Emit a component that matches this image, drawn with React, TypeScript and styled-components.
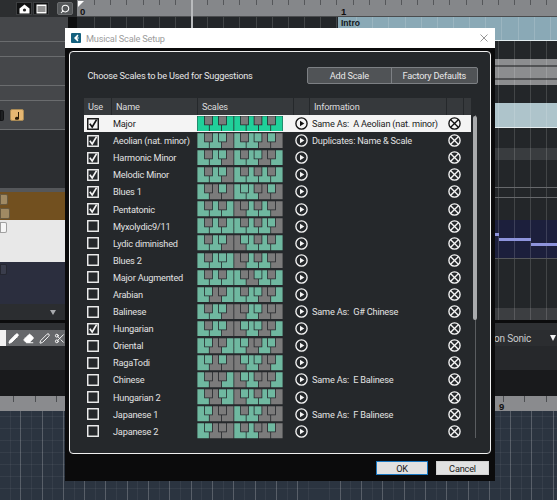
import React from "react";
import styled, { createGlobalStyle, css } from "styled-components";
import { Pencil, Eraser, Pen, Scissors, Search } from "lucide-react";

const Global = createGlobalStyle`
  html, body { margin: 0; padding: 0; background: #1a1b1d; }
  * { box-sizing: border-box; }
`;

const FONT = `Roboto, "Noto Sans", "Liberation Sans", sans-serif`;
const TEXT = "9.2px";

const Stage = styled.div`
  position: relative;
  width: 557px;
  height: 500px;
  overflow: hidden;
  font-family: ${FONT};
  letter-spacing: -0.2px;
  background: #1a1b1d;
`;

const Upper = styled.div`
  display: grid;
  grid-template-columns: 68px 9px 1fr;
  height: 320px;
`;

const Rail = styled.div`
  display: flex;
  flex-direction: column;
`;

const RailGap = styled.div`
  background: #0e0f10;
`;

const TopBar = styled.div`
  position: relative;
  z-index: 1;
  width: 77px;
  height: 17px;
  flex: none;
  display: flex;
  align-items: center;
  padding-left: 16px;
  gap: 1px;
  background: #2c2e30;
`;

const IconButton = styled.div`
  width: 16px;
  height: 13px;
  display: flex;
  align-items: center;
  justify-content: center;
  background: #111213;
  border: 1px solid #3c3e40;
  color: #fff;
`;

const SearchButton = styled(IconButton)`
  margin-left: 7px;
  background: #55585a;
  border-radius: 2px;
  border-color: #6a6c6e;
`;

const RailRow = styled.div<{ $h: number; $bg?: string }>`
  height: ${(p) => p.$h}px;
  flex: none;
  background: ${(p) => p.$bg || "#45474a"};
  border-bottom: 1px solid #6a6c6e;
  display: flex;
  align-items: center;
  gap: 3px;
`;

const RailBlock = styled.div<{ $h: number; $bg: string }>`
  height: ${(p) => p.$h}px;
  flex: none;
  background: ${(p) => p.$bg};
  display: flex;
  flex-direction: column;
  gap: 3px;
  padding-top: 2px;
`;

const StubButton = styled.div<{ $w: number; $bg: string }>`
  width: ${(p) => p.$w}px;
  height: 11px;
  flex: none;
  background: ${(p) => p.$bg};
  border: 1px solid rgba(0, 0, 0, 0.35);
  border-radius: 0 2px 2px 0;
`;

const NoteButton = styled.div`
  width: 14px;
  height: 12px;
  margin-left: 3px;
  background: #e6b772;
  border: 1px solid #a98a55;
  border-radius: 2px;
  display: flex;
  align-items: center;
  justify-content: center;
`;

const RailFoot = styled.div`
  flex: 1;
  background: #2b2d30;
  display: flex;
  justify-content: flex-end;
  align-items: center;
  padding-right: 12px;
`;

const RailCaret = styled.span`
  width: 0;
  height: 0;
  border-left: 3.5px solid transparent;
  border-right: 3.5px solid transparent;
  border-top: 5px solid #a8aaad;
`;

const Arrangement = styled.div`
  display: flex;
  flex-direction: column;
  overflow: hidden;
  background: #232629;
`;

const gridLines = css`
  background-image: repeating-linear-gradient(
    90deg,
    transparent 0 15.15px,
    rgba(255, 255, 255, 0.14) 15.15px 16.15px
  );
  background-position: 2px 0;
`;

const Ruler = styled.div`
  position: relative;
  height: 17px;
  flex: none;
  background-color: #85878a;
  background-image: repeating-linear-gradient(
    90deg,
    transparent 0 15.15px,
    #55575a 15.15px 16.15px
  );
  background-size: 100% 5px;
  background-repeat: no-repeat;
  background-position: 2px 0;
  border-bottom: 1px solid #4a4c4e;
`;

const RulerNumber = styled.span<{ $x: number }>`
  position: absolute;
  left: ${(p) => p.$x}px;
  top: 6px;
  font: 700 9.5px "Liberation Sans", sans-serif;
  letter-spacing: 0;
  color: #111;
`;

const StartMark = styled.div`
  position: absolute;
  left: 1px;
  top: 1px;
  width: 0;
  height: 0;
  border-top: 6px solid #fff;
  border-right: 6px solid transparent;
`;

const Playhead = styled.div`
  position: absolute;
  left: 114px;
  top: 0;
  width: 2px;
  height: 28px;
  background: #b9bbbd;
  z-index: 1;
`;

const Band = styled.div<{ $h: number; $bg?: string; $line?: string }>`
  position: relative;
  height: ${(p) => p.$h}px;
  flex: none;
  background-color: ${(p) => p.$bg || "#232629"};
  ${gridLines}
  ${(p) => p.$line && `border-bottom: 1px solid ${p.$line};`}
`;

const IntroClip = styled.div`
  margin-left: 261px;
  height: 100%;
  padding: 1px 0 0 3px;
  background-color: #8aa9b6;
  ${gridLines}
  background-position: 3px 0;
  font: 700 8.5px "Liberation Sans", sans-serif;
  letter-spacing: 0;
  color: #14181b;
  border-bottom: 1px solid #e4eef1;
`;

const Wave = styled.svg`
  display: block;
  width: 100%;
  height: 100%;
`;

const MidiNote = styled.div<{ $x: number; $y: number; $w: number }>`
  position: absolute;
  left: ${(p) => p.$x}px;
  top: ${(p) => p.$y}px;
  width: ${(p) => p.$w}px;
  height: 3px;
  background: #8e94dc;
`;

const Stack = styled.div`
  display: flex;
  flex-direction: column;
`;

const Strip = styled.div<{ $h: number; $bg: string }>`
  height: ${(p) => p.$h}px;
  background: ${(p) => p.$bg};
`;

const ToolBar = styled.div`
  height: 16px;
  display: flex;
  align-items: center;
  justify-content: space-between;
  background: #2b2d30;
`;

const Tools = styled.div`
  width: 65px;
  height: 16px;
  display: flex;
  align-items: center;
  gap: 4px;
  background: linear-gradient(90deg, #f2f2f2 0 6px, #66686b 6px);
  padding-left: 8px;
  color: #fff;
  overflow: hidden;
`;

const SonicLabel = styled.div`
  display: flex;
  align-items: center;
  gap: 19px;
  padding-right: 1px;
  font-size: 10px;
  color: #c9cbce;
`;

const Caret = styled.span`
  width: 0;
  height: 0;
  border-left: 3.5px solid transparent;
  border-right: 3.5px solid transparent;
  border-top: 6px solid #f2f2f2;
`;

const LowerRuler = styled.div`
  position: relative;
  height: 15px;
  background-color: #8a8b8e;
  background-image: repeating-linear-gradient(
    90deg,
    transparent 0 20.3px,
    #4d4f52 20.3px 21.3px
  );
  background-size: 100% 6px;
  background-repeat: no-repeat;
  background-position: -7px 0;
`;

const LowerNumber = styled(RulerNumber)`
  top: 5px;
`;

const LowerGrid = styled.div`
  height: 89px;
  background-color: #2b3440;
  background-image:
    repeating-linear-gradient(90deg, transparent 0 20.3px, rgba(255, 255, 255, 0.17) 20.3px 21.3px),
    repeating-linear-gradient(90deg, transparent 0 9.65px, rgba(255, 255, 255, 0.05) 9.65px 10.65px),
    repeating-linear-gradient(0deg, transparent 0 11px, rgba(255, 255, 255, 0.05) 11px 12px);
`;

/* ---- dialog ---- */

const Dialog = styled.div`
  position: absolute;
  left: 65px;
  top: 28px;
  width: 430px;
  height: 453px;
  display: flex;
  flex-direction: column;
  background: #0b0b0c;
  z-index: 2;
`;

const TitleBar = styled.div`
  height: 20px;
  flex: none;
  display: flex;
  align-items: center;
  padding: 0 7px 0 6px;
  gap: 5px;
  background: #fff;
  color: #9c9c9c;
  font-size: ${TEXT};
`;

const TitleText = styled.span`
  flex: 1;
`;

const Panel = styled.div`
  margin: 3px 4px 0;
  height: 403px;
  flex: none;
  padding: 15px 0 0 14px;
  background: #25282b;
  border: 1.5px solid #f0f0f0;
  border-radius: 4px;
  display: flex;
  flex-direction: column;
`;

const PanelHead = styled.div`
  display: flex;
  align-items: center;
  justify-content: space-between;
  height: 17px;
  padding: 0 12.5px 0 3.5px;
`;

const PanelTitle = styled.div`
  font-size: ${TEXT};
  color: #e6e6e6;
`;

const Segments = styled.div`
  display: flex;
  width: 171px;
  height: 17px;
  background: #505356;
  border: 1px solid #7d8084;
  border-radius: 2px;
`;

const Segment = styled.div<{ $w: number }>`
  width: ${(p) => p.$w}px;
  display: flex;
  align-items: center;
  justify-content: center;
  font-size: ${TEXT};
  color: #e8e8e8;
  & + & {
    border-left: 1px solid #7d8084;
  }
`;

const columns = "27px 86px 96px 16px 137px 17px 8px";

const TableWrap = styled.div`
  position: relative;
  margin-top: 14px;
  width: 387px;
`;

const Header = styled.div`
  display: grid;
  grid-template-columns: ${columns};
  height: 17px;
  background: #36393c;
`;

const HeadCell = styled.div<{ $pad?: number }>`
  display: flex;
  align-items: center;
  padding-left: ${(p) => p.$pad ?? 4}px;
  font-size: ${TEXT};
  color: #dcdcdc;
  border-left: 1px solid #25282b;
  &:first-child {
    border-left: 0;
  }
`;

const Row = styled.div<{ $sel?: boolean }>`
  display: grid;
  grid-template-columns: ${columns};
  height: 17.1px;
  align-items: center;
  background: ${(p) => (p.$sel ? "#f4f4f4" : "transparent")};
  color: ${(p) => (p.$sel ? "#222" : "#e2e2e2")};
`;

const Check = styled.svg`
  display: block;
  margin-left: 3px;
  width: 12px;
  height: 12px;
`;

const NameCell = styled.div`
  padding-left: 2px;
  font-size: ${TEXT};
  white-space: nowrap;
`;

const KeysSvg = styled.svg`
  display: block;
  width: 86px;
  height: 15.5px;
`;

const InfoCell = styled.div`
  padding-left: 3px;
  font-size: ${TEXT};
  white-space: pre;
`;

const RoundIcon = styled.svg`
  display: block;
  width: 13px;
  height: 13px;
  margin: auto;
`;

const ScrollTrack = styled.div`
  position: absolute;
  left: 390.5px;
  top: 17px;
  width: 1px;
  height: 323px;
  background: #5a5d60;
`;

const ScrollThumb = styled.div`
  position: absolute;
  left: 389px;
  top: 18px;
  width: 3.5px;
  height: 204px;
  border-radius: 2px;
  background: #a9abad;
`;

const DialogFoot = styled.div`
  flex: 1;
  display: flex;
  justify-content: flex-end;
  align-items: flex-start;
  gap: 8px;
  padding: 7px 6px 0 0;
`;

const DialogButton = styled.div<{ $primary?: boolean; $w: number }>`
  width: ${(p) => p.$w}px;
  height: 14px;
  display: flex;
  align-items: center;
  justify-content: center;
  font-size: ${TEXT};
  color: #1a1a1a;
  background: #e1e1e1;
  border: ${(p) => (p.$primary ? "1.5px solid #1a78c2" : "1px solid #d0d0d0")};
`;

const keyW = 86 / 7;
const whiteIdx = [0, 2, 4, 5, 7, 9, 11];
const blackCentre: Record<number, number> = { 1: 11.5, 3: 25.5, 6: 47.5, 8: 61, 10: 74.5 };
const BH = 8.5;

function Keys({ mask, sel }: { mask: string; sel?: boolean }) {
  const on = sel ? "#20d09a" : "#6fb8a0";
  const off = "#7b7b7b";
  const stroke = "#24262a";
  return (
    <KeysSvg viewBox="0 0 86 15.5">
      <rect width="86" height="15.5" fill={stroke} />
      {whiteIdx.map((n, i) => {
        const x0 = i * keyW;
        const x1 = x0 + keyW;
        const left = blackCentre[n - 1];
        const right = blackCentre[n + 1];
        const l = left !== undefined ? left + 4.3 : x0 + 0.4;
        const r = right !== undefined ? right - 4.3 : x1 - 0.4;
        const pts = [
          `${l},0.3`, `${r},0.3`, `${r},${BH + 0.8}`, `${x1 - 0.4},${BH + 0.8}`,
          `${x1 - 0.4},15.2`, `${x0 + 0.4},15.2`, `${x0 + 0.4},${BH + 0.8}`, `${l},${BH + 0.8}`,
        ].join(" ");
        return <polygon key={n} points={pts} fill={mask[n] === "1" ? on : off} />;
      })}
      {Object.entries(blackCentre).map(([n, c]) => (
        <rect key={n} x={c - 3.5} y="0.3" width="7" height={BH - 0.3} fill={mask[Number(n)] === "1" ? on : off} />
      ))}
    </KeysSvg>
  );
}

function CheckBox({ on, sel }: { on: boolean; sel?: boolean }) {
  const c = sel ? "#111" : "#f4f4f4";
  return (
    <Check viewBox="0 0 12 12">
      <rect x="0.75" y="0.75" width="10.5" height="10.5" fill="none" stroke={c} strokeWidth="1.4" />
      {on && <path d="M2.8 5.8 L5.2 9 L9.6 1.6" fill="none" stroke={c} strokeWidth="1.7" />}
    </Check>
  );
}

function PlayIcon({ sel }: { sel?: boolean }) {
  const c = sel ? "#111" : "#f4f4f4";
  return (
    <RoundIcon viewBox="0 0 13 13">
      <circle cx="6.5" cy="6.5" r="5.6" fill="none" stroke={c} strokeWidth="1.35" />
      <path d="M5 3.8 L9.3 6.5 L5 9.2 Z" fill={c} />
    </RoundIcon>
  );
}

function RemoveIcon({ sel }: { sel?: boolean }) {
  const c = sel ? "#111" : "#f4f4f4";
  return (
    <RoundIcon viewBox="0 0 13 13">
      <circle cx="6.5" cy="6.5" r="5.6" fill="none" stroke={c} strokeWidth="1.35" />
      <path d="M2.7 2.7 L10.3 10.3 M10.3 2.7 L2.7 10.3" stroke={c} strokeWidth="1.35" />
    </RoundIcon>
  );
}

const scales: { name: string; on: boolean; mask: string; info?: string }[] = [
  { name: "Major", on: true, mask: "101011010101", info: "Same As:  A Aeolian (nat. minor)" },
  { name: "Aeolian (nat. minor)", on: true, mask: "101101011010", info: "Duplicates: Name & Scale" },
  { name: "Harmonic Minor", on: true, mask: "101101011001" },
  { name: "Melodic Minor", on: true, mask: "101101010101" },
  { name: "Blues 1", on: true, mask: "100101110010" },
  { name: "Pentatonic", on: true, mask: "101010010100" },
  { name: "Myxolydic9/11", on: false, mask: "101011010110" },
  { name: "Lydic diminished", on: false, mask: "101100110101" },
  { name: "Blues 2", on: false, mask: "101110010100" },
  { name: "Major Augmented", on: false, mask: "101011001101" },
  { name: "Arabian", on: false, mask: "110011011001" },
  { name: "Balinese", on: false, mask: "101100011000", info: "Same As:  G# Chinese" },
  { name: "Hungarian", on: true, mask: "101100111001" },
  { name: "Oriental", on: false, mask: "110011100110" },
  { name: "RagaTodi", on: false, mask: "110100111001" },
  { name: "Chinese", on: false, mask: "100010110001", info: "Same As:  E Balinese" },
  { name: "Hungarian 2", on: false, mask: "100110110110" },
  { name: "Japanese 1", on: false, mask: "110001011000", info: "Same As:  F Balinese" },
  { name: "Japanese 2", on: false, mask: "110001010010" },
];

export default function App() {
  return (
    <Stage>
      <Global />
      <Upper>
        <Rail>
          <TopBar>
            <IconButton>
              <svg width="11" height="10" viewBox="0 0 11 10">
                <path d="M5.5 0.5 L10.5 4.5 V9.5 H0.5 V4.5 Z" fill="#fff" />
                <circle cx="5.5" cy="6" r="1.6" fill="#222" />
              </svg>
            </IconButton>
            <IconButton>
              <svg width="11" height="10" viewBox="0 0 11 10">
                <rect x="0.5" y="0.5" width="10" height="9" fill="#fff" />
                <path d="M1.5 3 H9.5 M1.5 5 H9.5 M1.5 7 H9.5" stroke="#222" />
              </svg>
            </IconButton>
            <SearchButton>
              <Search size={10} strokeWidth={2.5} style={{ transform: "scaleX(-1)" }} />
            </SearchButton>
          </TopBar>
          <RailRow $h={25} />
          <RailRow $h={15} />
          <RailRow $h={29} />
          <RailRow $h={15} />
          <RailRow $h={29}>
            <StubButton $w={4} $bg="#1e2022" />
            <NoteButton>
              <svg width="8" height="9" viewBox="0 0 8 9">
                <path d="M5 1 H6 V7 A2 1.5 0 1 1 5 6 Z" fill="#2a1c08" />
              </svg>
            </NoteButton>
          </RailRow>
          <RailBlock $h={58} $bg="#2c2e31" />
          <RailBlock $h={4} $bg="#55575a" />
          <RailBlock $h={28} $bg="#72501f">
            <StubButton $w={8} $bg="#a08a63" />
            <StubButton $w={10} $bg="#a08a63" />
          </RailBlock>
          <RailBlock $h={42} $bg="#e8e8e8">
            <StubButton $w={7} $bg="#f6f6f6" />
          </RailBlock>
          <RailBlock $h={42} $bg="#2b2e3e">
            <StubButton $w={7} $bg="#3a3d4c" />
          </RailBlock>
          <RailFoot>
            <RailCaret />
          </RailFoot>
        </Rail>
        <RailGap />
        <Arrangement>
          <Ruler>
            <StartMark />
            <RulerNumber $x={3}>0</RulerNumber>
            <RulerNumber $x={264}>1</RulerNumber>
            <Playhead />
          </Ruler>
          <Band $h={24}>
            <IntroClip>Intro</IntroClip>
          </Band>
          <Band $h={18} />
          <Band $h={26} $bg="#8c8d8f">
            <Wave viewBox="0 0 480 26" preserveAspectRatio="none">
              <path d="M0 7 H480 M0 20 H480" stroke="#17181a" strokeWidth="1.2" />
            </Wave>
          </Band>
          <Band $h={18} />
          <Band $h={25} $bg="#aec4cb" $line="#e8eff1" />
          <Band $h={20} />
          <Band $h={12} $bg="#393c3f" />
          <Band $h={28} $line="#66686b" />
          <Band $h={10} $line="#66686b" />
          <Band $h={22} />
          <Band $h={39} $bg="#1c1f3c" $line="#55575a">
            <MidiNote $x={418} $y={13} $w={4} />
            <MidiNote $x={422} $y={18} $w={32} />
            <MidiNote $x={454} $y={23} $w={30} />
          </Band>
          <Band $h={49} />
          <Band $h={12} $bg="#3c3e41" />
        </Arrangement>
      </Upper>
      <Stack>
        <Strip $h={3} $bg="#0c0c0d" />
        <Strip $h={7} $bg="#2e3033" />
        <ToolBar>
          <Tools>
            <Pencil size={13} fill="#fff" />
            <Eraser size={13} fill="#fff" />
            <Pen size={13} />
            <Scissors size={13} />
          </Tools>
          <SonicLabel>
            ion Sonic
            <Caret />
          </SonicLabel>
        </ToolBar>
        <Strip $h={24} $bg="#26282b" />
        <Strip $h={26} $bg="#191a1c" />
        <LowerRuler>
          <LowerNumber $x={499}>9</LowerNumber>
        </LowerRuler>
        <LowerGrid />
      </Stack>

      <Dialog>
        <TitleBar>
          <svg width="10" height="10" viewBox="0 0 10 10">
            <rect width="10" height="10" rx="1" fill="#14617f" />
            <path d="M6.5 1.5 L3 5 L6.5 8.5 L7.5 7.3 L6 5.6 H7.8 V4.4 H6 L7.5 2.7 Z" fill="#fff" />
          </svg>
          <TitleText>Musical Scale Setup</TitleText>
          <svg width="8" height="8" viewBox="0 0 8 8">
            <path d="M0.5 0.5 L7.5 7.5 M7.5 0.5 L0.5 7.5" stroke="#8a8a8a" strokeWidth="0.9" />
          </svg>
        </TitleBar>
        <Panel>
          <PanelHead>
            <PanelTitle>Choose Scales to be Used for Suggestions</PanelTitle>
            <Segments>
              <Segment $w={84}>Add Scale</Segment>
              <Segment $w={86}>Factory Defaults</Segment>
            </Segments>
          </PanelHead>
          <TableWrap>
            <Header>
              <HeadCell>Use</HeadCell>
              <HeadCell>Name</HeadCell>
              <HeadCell>Scales</HeadCell>
              <HeadCell />
              <HeadCell>Information</HeadCell>
              <HeadCell />
              <HeadCell />
            </Header>
            {scales.map((s, i) => (
              <Row key={s.name} $sel={i === 0}>
                <CheckBox on={s.on} sel={i === 0} />
                <NameCell>{s.name}</NameCell>
                <Keys mask={s.mask} sel={i === 0} />
                <PlayIcon sel={i === 0} />
                <InfoCell>{s.info}</InfoCell>
                <RemoveIcon sel={i === 0} />
                <span />
              </Row>
            ))}
            <ScrollTrack />
            <ScrollThumb />
          </TableWrap>
        </Panel>
        <DialogFoot>
          <DialogButton $primary $w={52}>OK</DialogButton>
          <DialogButton $w={53}>Cancel</DialogButton>
        </DialogFoot>
      </Dialog>
    </Stage>
  );
}
